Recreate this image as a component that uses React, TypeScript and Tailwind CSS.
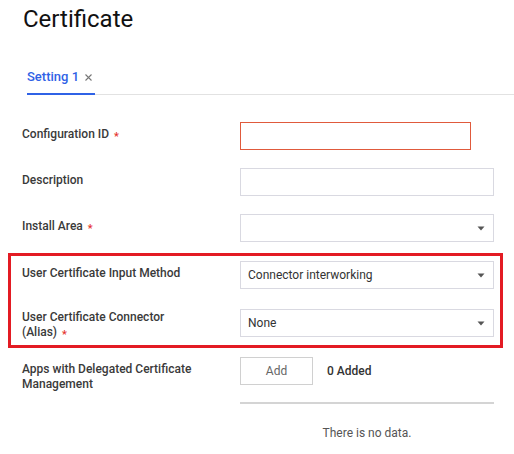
import type { ReactNode } from "react";

function Req() {
  return <span className="ml-[5px] text-[11px] leading-none align-[-2px] text-[#e5322d]">*</span>;
}

function Arrow() {
  return (
    <svg width="8" height="5" viewBox="0 0 8 5" className="shrink-0">
      <path d="M0.5 0.5 L7.5 0.5 L4 4.5 Z" fill="#555" />
    </svg>
  );
}

function Select({ value }: { value?: string }) {
  return (
    <div className="w-[254px] h-[28px] border border-[#d9d9e1] flex items-center justify-between pl-[7px] pr-[8px] text-[12px] text-[#333]">
      <span>{value}</span>
      <Arrow />
    </div>
  );
}

function Label({ children, className = "pt-[5px]" }: { children: ReactNode; className?: string }) {
  return (
    <div className={`w-[218px] pr-[44px] text-[12px] leading-[15px] font-medium text-[#3a3a3a] ${className}`}>
      {children}
    </div>
  );
}

export default function App() {
  return (
    <div className="w-[514px] h-[454px] bg-white overflow-hidden font-[Roboto,sans-serif]">
      <h1 className="pl-[23px] pt-[5px] text-[24px] leading-[28px] text-[#111] font-normal">Certificate</h1>

      {/* Tabs */}
      <div className="ml-[27px] mt-[34px] flex border-b border-[#e2e2e2]">
        <div className="-mb-px flex items-center gap-[6px] pr-[3px] pb-[6px] border-b-2 border-[#2f62e6] text-[13px] leading-[20px] font-medium text-[#2f62e6]">
          <span>Setting 1</span>
          <svg width="7" height="7" viewBox="0 0 7 7">
            <path d="M0.5 0.5 L6.5 6.5 M6.5 0.5 L0.5 6.5" stroke="#777" strokeWidth="1.1" />
          </svg>
        </div>
      </div>

      {/* Form */}
      <div className="mt-[27px] flex flex-col gap-[18px] pl-[22px]">
        <div className="flex items-start">
          <Label>
            Configuration ID
            <Req />
          </Label>
          <div className="w-[231px] h-[28px] border border-[#e05a3c]" />
        </div>
        <div className="flex items-start">
          <Label>Description</Label>
          <div className="w-[254px] h-[28px] border border-[#d9d9e1]" />
        </div>
        <div className="flex items-start">
          <Label>
            Install Area
            <Req />
          </Label>
          <Select />
        </div>
      </div>

      {/* highlighted block */}
      <div className="mt-[11px] ml-[8px] w-[495px] border-[3px] border-[#e31b23] pl-[11px] pt-[5px] pb-[5px] flex flex-col gap-[20px]">
        <div className="flex items-start">
          <Label>User Certificate Input Method</Label>
          <Select value="Connector interworking" />
        </div>
        <div className="flex items-start">
          <Label className="pt-[1px]">
            User Certificate Connector (Alias)
            <Req />
          </Label>
          <Select value="None" />
        </div>
      </div>

      <div className="mt-[9px] pl-[22px] flex items-start">
        <Label>Apps with Delegated Certificate Management</Label>
        <div className="flex items-center">
          <button
            type="button"
            className="w-[73px] h-[28px] border border-[#d0d0d0] text-[12px] text-[#666] bg-white"
          >
            Add
          </button>
          <span className="ml-[14px] text-[12px] font-medium text-[#333]">0 Added</span>
        </div>
      </div>

      <div className="ml-[240px] w-[254px] mt-[10px] h-[2px] bg-[#d4d4d4]" />
      <p className="ml-[240px] w-[254px] mt-[21px] text-center text-[12px] leading-[16px] text-[#555]">
        There is no data.
      </p>
    </div>
  );
}
